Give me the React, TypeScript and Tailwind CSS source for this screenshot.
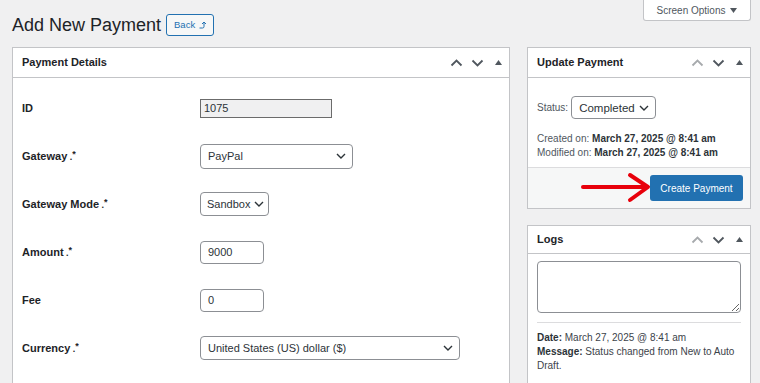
import React from "react";

function ChevronUp({ light }: { light?: boolean }) {
  return (
    <svg width="13" height="8" viewBox="0 0 13 8" className={light ? "text-[#a7aaad]" : "text-[#50575e]"}>
      <path d="M1.5 6.5l5-5 5 5" fill="none" stroke="currentColor" strokeWidth="1.8" />
    </svg>
  );
}

function ChevronDown() {
  return (
    <svg width="13" height="8" viewBox="0 0 13 8" className="text-[#50575e]">
      <path d="M1.5 1.5l5 5 5-5" fill="none" stroke="currentColor" strokeWidth="1.8" />
    </svg>
  );
}

function PanelHeader({ title, h, lightUp }: { title: string; h: string; lightUp?: boolean }) {
  return (
    <div className={`flex items-center justify-between border-b border-[#c3c4c7] pl-[9px] ${h}`}>
      <h2 className="text-[11px] font-bold text-[#1d2327]">{title}</h2>
      <div className="flex items-center">
        <span className="flex w-[21px] justify-center">
          <ChevronUp light={lightUp} />
        </span>
        <span className="flex w-[21px] justify-center">
          <ChevronDown />
        </span>
        <span className="flex w-[21px] justify-center">
          <svg width="7" height="5" viewBox="0 0 7 5">
            <path d="M0 5L3.5 0 7 5z" fill="#50575e" />
          </svg>
        </span>
      </div>
    </div>
  );
}

function SelectBox({
  value,
  w,
  h,
  text,
  pad,
}: {
  value: string;
  w: string;
  h: string;
  text?: string;
  pad?: string;
}) {
  return (
    <div
      className={`flex items-center justify-between rounded-[4px] border border-[#8c8f94] bg-white ${
        pad ?? "pl-[7px] pr-[6px]"
      } ${w} ${h} ${text ?? "text-[11px]"} text-[#2c3338]`}
    >
      <span>{value}</span>
      <svg width="10" height="6" viewBox="0 0 10 6">
        <path d="M1 1l4 4 4-4" fill="none" stroke="#2c3338" strokeWidth="1.4" />
      </svg>
    </div>
  );
}

function TextBox({ value }: { value: string }) {
  return (
    <div className="flex h-[23px] w-[64px] items-center rounded-[4px] border border-[#8c8f94] bg-white pl-[7px] text-[11px] text-[#2c3338]">
      {value}
    </div>
  );
}

function Row({ label, req, children }: { label: string; req?: boolean; children: React.ReactNode }) {
  return (
    <div className="flex h-[48px] items-center">
      <div className="w-[178px] text-[11px] font-bold text-[#1d2327]">
        {label}
        {req && (
          <>
            <span className="text-[9px]"> .</span>
            <span className="relative -top-[3px] text-[9px]">*</span>
          </>
        )}
      </div>
      {children}
    </div>
  );
}

export default function App() {
  return (
    <div className="relative h-[383px] w-[760px] overflow-hidden bg-[#f0f0f1] font-['Liberation_Sans',Arial,sans-serif] text-[#1d2327]">
      {/* screen options tab */}
      <div className="absolute right-[9px] top-0 flex h-[21px] w-[108px] items-center justify-center gap-[5px] rounded-b-[3px] border border-t-0 border-[#c3c4c7] bg-white text-[10px] text-[#50575e]">
        <span>Screen Options</span>
        <svg width="7" height="5" viewBox="0 0 7 5">
          <path d="M0 0h7L3.5 5z" fill="#50575e" />
        </svg>
      </div>

      <div className="flex h-[36px] items-end gap-[5px] pl-[12px]">
        <h1 className="text-[18px] leading-[22px] text-[#1d2327]">Add New Payment</h1>
        <div className="flex h-[22px] w-[48px] items-center justify-center gap-[4px] rounded-[3px] border border-[#2271b1] bg-[#f6f7f7] text-[9.5px] text-[#2271b1]">
          <span>Back</span>
          <svg width="7" height="8" viewBox="0 0 7 8">
            <path d="M0.5 7H3.5Q5 7 5 5.5V1.5" fill="none" stroke="#2271b1" strokeWidth="1" />
            <path d="M3 3L5 1 7 3" fill="none" stroke="#2271b1" strokeWidth="1" />
          </svg>
        </div>
      </div>

      <div className="mt-[11px] flex items-start gap-[17px] pl-[12px]">
        {/* Payment details */}
        <div className="h-[400px] w-[498px] border border-[#c3c4c7] bg-white">
          <PanelHeader title="Payment Details" h="h-[30px]" />
          <div className="pl-[9px] pt-[6px]">
            <Row label="ID">
              <div className="flex h-[19px] w-[132px] items-center border border-[#6b6b6b] bg-[#f0f0f1] pl-[3px] text-[11px] text-[#2c3338]">
                1075
              </div>
            </Row>
            <Row label="Gateway" req>
              <SelectBox value="PayPal" w="w-[153px]" h="h-[25px]" />
            </Row>
            <Row label="Gateway Mode" req>
              <SelectBox value="Sandbox" w="w-[69px]" h="h-[24px]" pad="pl-[6px] pr-[4px]" />
            </Row>
            <Row label="Amount" req>
              <TextBox value="9000" />
            </Row>
            <Row label="Fee">
              <TextBox value="0" />
            </Row>
            <Row label="Currency" req>
              <SelectBox value="United States (US) dollar ($)" w="w-[260px]" h="h-[24px]" />
            </Row>
          </div>
        </div>

        {/* right column */}
        <div className="flex w-[224px] flex-col gap-[16px]">
          <div className="border border-[#c3c4c7] bg-white">
            <PanelHeader title="Update Payment" h="h-[30px]" lightUp />
            <div className="px-[9px] pb-[7px] pt-[18px] text-[10px] leading-[14px]">
              <div className="flex items-center gap-[3px]">
                <span className="text-[#50575e]">Status:</span>
                <SelectBox value="Completed" w="w-[85px]" h="h-[23px]" text="text-[11.5px]" />
              </div>
              <div className="mt-[13px] text-[#50575e]">
                Created on: <b className="text-[#2c3338]">March 27, 2025 @ 8:41 am</b>
              </div>
              <div className="text-[#50575e]">
                Modified on: <b className="text-[#2c3338]">March 27, 2025 @ 8:41 am</b>
              </div>
            </div>
            <div className="flex justify-end border-t border-[#dcdcde] bg-[#f6f7f7] px-[7px] py-[7px]">
              <div className="flex h-[26px] w-[93px] items-center justify-center rounded-[3px] bg-[#2271b1] text-[10px] text-white">
                Create Payment
              </div>
            </div>
          </div>

          <div className="h-[170px] border border-[#c3c4c7] bg-white">
            <PanelHeader title="Logs" h="h-[28px]" lightUp />
            <div className="px-[9px] pt-[7px] text-[10px] leading-[14px] text-[#3c434a]">
              <textarea
                readOnly
                className="block h-[52px] w-[204px] rounded-[4px] border border-[#8c8f94] bg-white"
              />
              <div className="mt-[9px] border-t border-[#dcdcde]" />
              <div className="mt-[8px]">
                <b className="text-[#2c3338]">Date:</b> March 27, 2025 @ 8:41 am
              </div>
              <div>
                <b className="text-[#2c3338]">Message:</b> Status changed from New to Auto
              </div>
              <div>Draft.</div>
            </div>
          </div>
        </div>
      </div>

      {/* red annotation arrow */}
      <svg className="absolute left-[580px] top-[172px]" width="74" height="32" viewBox="0 0 74 32">
        <path d="M3 15H66" stroke="#e8000b" strokeWidth="4" strokeLinecap="round" />
        <path d="M50 3L68 15 50 28" fill="none" stroke="#e8000b" strokeWidth="4" strokeLinecap="round" strokeLinejoin="round" />
      </svg>
    </div>
  );
}
